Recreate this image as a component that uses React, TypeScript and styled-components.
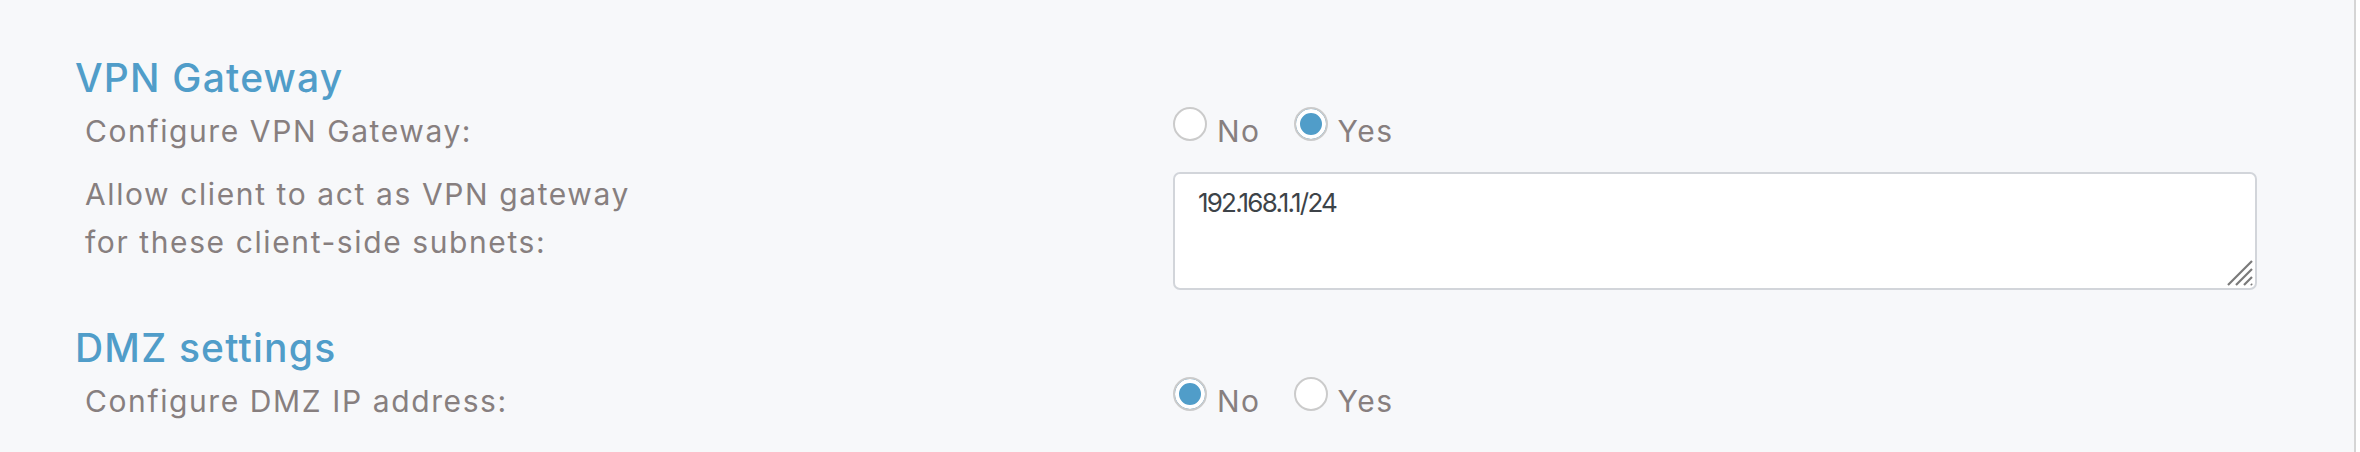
import styled, { createGlobalStyle } from "styled-components";

const GlobalStyle = createGlobalStyle`
  body {
    margin: 0;
    background: #ffffff;
  }
`;

const sections = [
  {
    title: "VPN Gateway",
    rows: [
      { label: ["Configure VPN Gateway:"], kind: "radio", value: "yes", name: "vpn" },
      {
        label: ["Allow client to act as VPN gateway", "for these client-side subnets:"],
        kind: "text",
        value: "192.168.1.1/24",
      },
    ],
  },
  {
    title: "DMZ settings",
    rows: [{ label: ["Configure DMZ IP address:"], kind: "radio", value: "no", name: "dmz" }],
  },
];

const App = () => {
  return (
    <>
      <GlobalStyle />
      <Page>
        {sections.map((section) => (
          <Section key={section.title}>
            <Heading>{section.title}</Heading>
            {section.rows.map((row, ind) => (
              <Row key={ind}>
                <Label>
                  {row.label.map((line) => (
                    <div key={line}>{line}</div>
                  ))}
                </Label>
                {row.kind === "radio" ? (
                  <RadioGroup>
                    <RadioOption>
                      <Radio type="radio" name={row.name} defaultChecked={row.value === "no"} />
                      No
                    </RadioOption>
                    <RadioOption>
                      <Radio type="radio" name={row.name} defaultChecked={row.value === "yes"} />
                      Yes
                    </RadioOption>
                  </RadioGroup>
                ) : (
                  <AreaWrap>
                    <TextArea defaultValue={row.value} />
                    <Grip width="28" height="28" viewBox="0 0 28 28">
                      <path d="M26 2 L2 26 M26 10 L10 26 M26 18 L18 26 M25 25 L26 26" />
                    </Grip>
                  </AreaWrap>
                )}
              </Row>
            ))}
          </Section>
        ))}
      </Page>
    </>
  );
};

export default App;

const Page = styled.div`
  box-sizing: border-box;
  width: 2356px;
  min-height: 100vh;
  padding: 54px 0 0 75px;
  background: #f7f8fa;
  border-right: 2px solid #d5d5d5;
  font-family: Inter, "Open Sans", sans-serif;
`;

const Section = styled.section`
  & + & {
    margin-top: 34px;
  }
`;

const Heading = styled.h2`
  margin: 0 0 5px;
  font-size: 39px;
  line-height: 48px;
  font-weight: 500;
  letter-spacing: 1.2px;
  color: #509dc9;
`;

const Row = styled.div`
  display: grid;
  grid-template-columns: 1088px 1084px;
  padding-left: 10px;

  & + & {
    margin-top: 15px;
  }
`;

const Label = styled.div`
  font-size: 30px;
  line-height: 48px;
  letter-spacing: 1.6px;
  color: #877f7f;
`;

const RadioGroup = styled.div`
  display: flex;
  gap: 33px;
`;

const RadioOption = styled.label`
  display: flex;
  align-items: flex-start;
  gap: 10px;
  font-size: 30px;
  line-height: 48px;
  letter-spacing: 1.5px;
  color: #877f7f;
`;

const Radio = styled.input`
  appearance: none;
  box-sizing: border-box;
  width: 34px;
  height: 34px;
  margin: 0;
  border: 2px solid #cbcbcb;
  border-radius: 50%;
  background: #ffffff;

  &:checked {
    background: #509dc9;
    box-shadow: inset 0 0 0 4px #ffffff;
  }
`;

const AreaWrap = styled.div`
  position: relative;
  width: 1084px;
  height: 118px;
  margin-top: 2px;
`;

const TextArea = styled.textarea`
  box-sizing: border-box;
  display: block;
  width: 100%;
  height: 100%;
  margin: 0;
  padding: 9px 23px;
  border: 2px solid #d2d5da;
  border-radius: 7px;
  background: #ffffff;
  resize: none;
  font-family: Inter, "Open Sans", sans-serif;
  font-size: 26px;
  line-height: 40px;
  letter-spacing: -1.8px;
  color: #3d4348;
  outline: none;
`;

const Grip = styled.svg`
  position: absolute;
  right: 3px;
  bottom: 3px;
  fill: none;
  stroke: #7a7a7a;
  stroke-width: 2.2;
`;
